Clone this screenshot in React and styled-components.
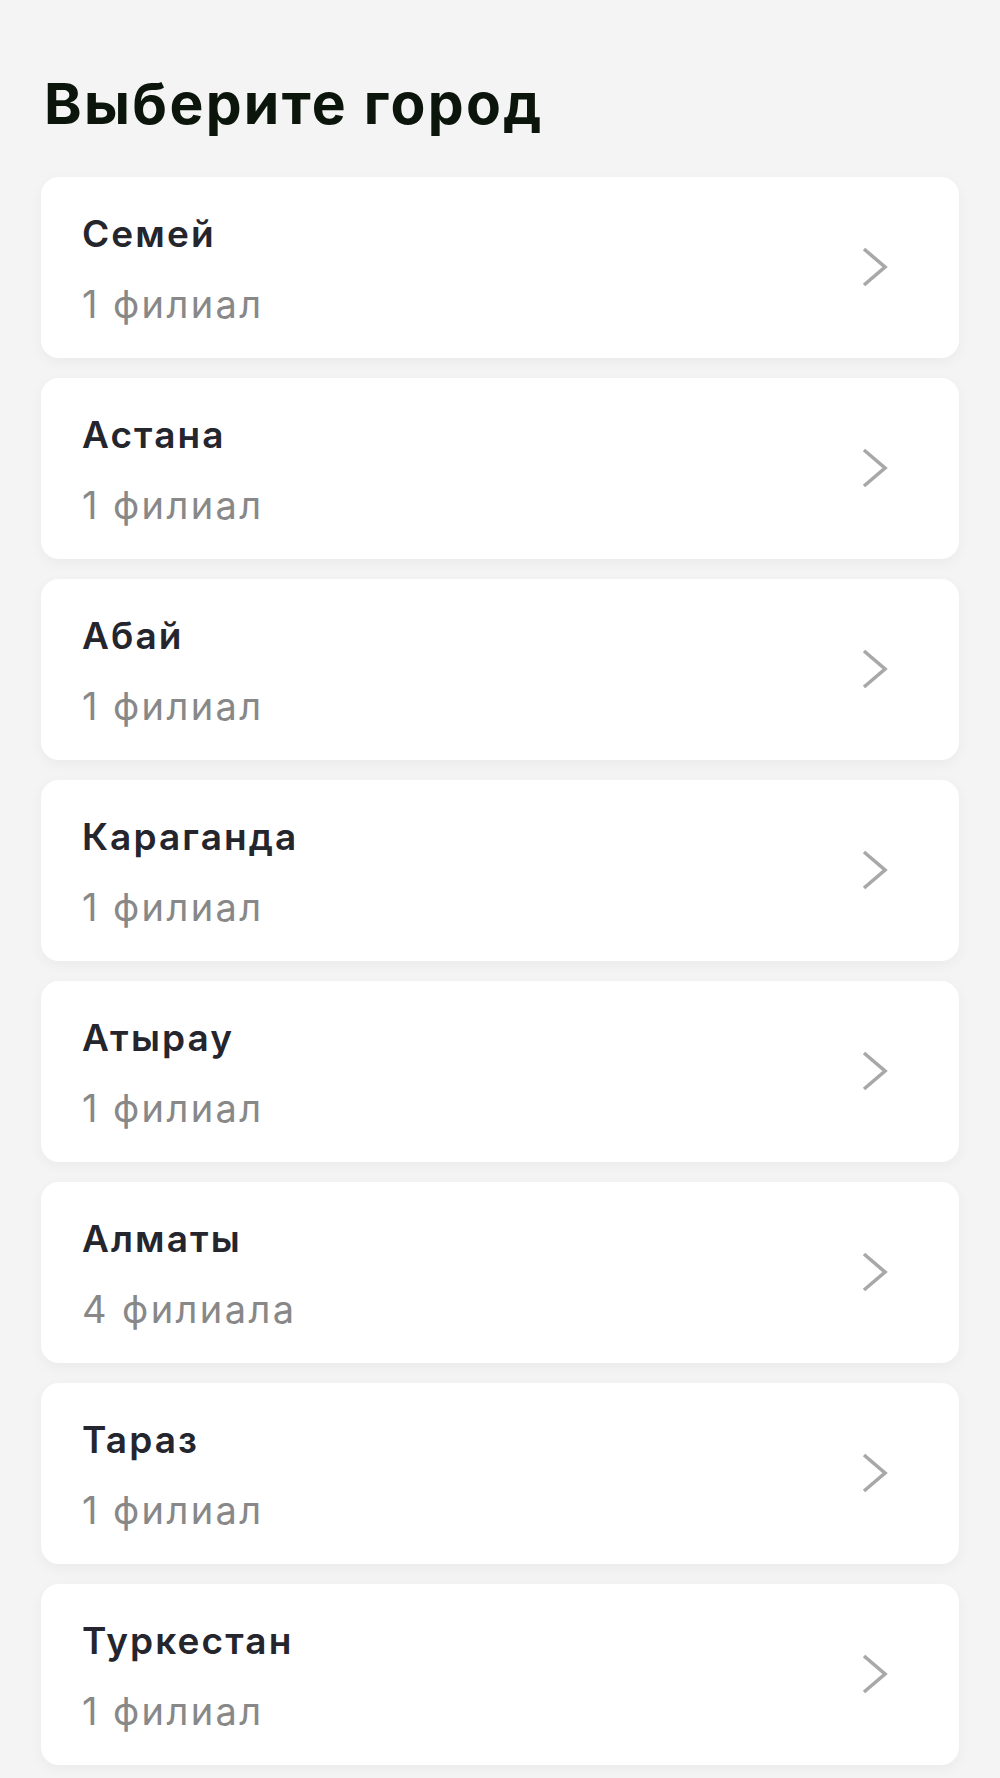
import React from "react";
import styled, { createGlobalStyle } from "styled-components";

const GlobalStyle = createGlobalStyle`
  html, body {
    margin: 0;
    padding: 0;
    background: #f4f4f4;
  }
  body {
    font-family: Inter, "Noto Sans", "Liberation Sans", sans-serif;
    -webkit-font-smoothing: antialiased;
  }
`;

const Page = styled.main`
  min-height: 1778px;
  box-sizing: border-box;
  padding: 71px 41px 13px;
  background: #f4f4f4;
  display: flex;
  flex-direction: column;
`;

const Title = styled.h1`
  margin: 0 0 40px 3px;
  font-size: 57px;
  line-height: 66px;
  font-weight: 700;
  color: #0b150c;
  letter-spacing: 2.3px;
`;

const List = styled.ul`
  list-style: none;
  margin: 0;
  padding: 0;
  display: flex;
  flex-direction: column;
  gap: 20px;
`;

const Card = styled.li`
  box-sizing: border-box;
  background: #ffffff;
  border-radius: 18px;
  box-shadow: 0 4px 14px rgba(0, 0, 0, 0.045);
  display: flex;
  align-items: center;
  justify-content: space-between;
  padding: 36px 71px 33px 41px;
`;

const Info = styled.div`
  display: flex;
  flex-direction: column;
  gap: 28px;
`;

const Name = styled.span`
  font-size: 37px;
  line-height: 42px;
  font-weight: 600;
  color: #24252d;
  letter-spacing: 2.1px;
`;

const Count = styled.span`
  font-size: 38px;
  line-height: 42px;
  font-weight: 400;
  color: #888888;
  letter-spacing: 2.4px;
`;

const ChevronIcon = styled.svg`
  flex: none;
  margin-bottom: 4px;
`;

const Chevron = () => (
  <ChevronIcon width="26" height="40" viewBox="0 0 26 40" aria-hidden="true">
    <polyline
      points="2,2 23,20 2,38"
      fill="none"
      stroke="#a8a8a8"
      strokeWidth="3.6"
    />
  </ChevronIcon>
);

const cities = [
  ["Семей", "1 филиал"],
  ["Астана", "1 филиал"],
  ["Абай", "1 филиал"],
  ["Караганда", "1 филиал"],
  ["Атырау", "1 филиал"],
  ["Алматы", "4 филиала"],
  ["Тараз", "1 филиал"],
  ["Туркестан", "1 филиал"],
];

export default function App() {
  return (
    <>
      <GlobalStyle />
      <Page>
        <Title>Выберите город</Title>
        <List>
          {cities.map(([name, count]) => (
            <Card key={name}>
              <Info>
                <Name>{name}</Name>
                <Count>{count}</Count>
              </Info>
              <Chevron />
            </Card>
          ))}
        </List>
      </Page>
    </>
  );
}
